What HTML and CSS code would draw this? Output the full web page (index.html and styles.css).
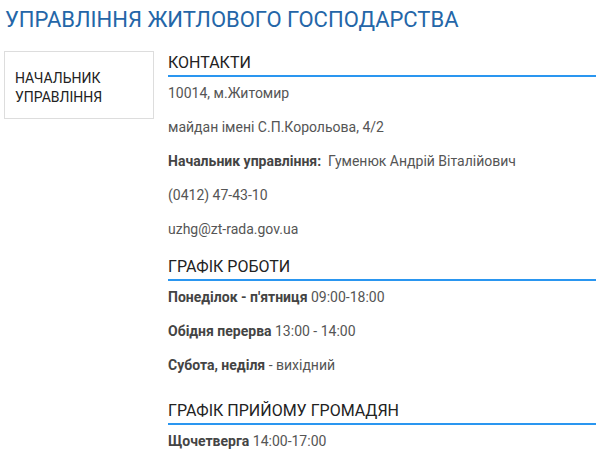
FILE: index.html
```html
<!DOCTYPE html>
<html lang="uk">
<head>
  <meta charset="UTF-8">
  <meta name="viewport" content="width=device-width, initial-scale=1.0">
  <title>Управління житлового господарства</title>
  <link rel="stylesheet" href="styles.css">
</head>
<body>
  <h1 class="page-title">Управління житлового господарства</h1>
  <div class="layout">
    <div class="chief-card">
      <p>Начальник управління</p>
    </div>
    <div class="info">
      <div class="section">
        <h3>Контакти</h3>
        <p>10014, м.Житомир</p>
        <p>майдан імені С.П.Корольова, 4/2</p>
        <p><strong>Начальник управління:</strong>&nbsp; Гуменюк Андрій Віталійович</p>
        <p>(0412) 47-43-10</p>
        <p>uzhg@zt-rada.gov.ua</p>
      </div>
      <div class="section">
        <h3>Графік роботи</h3>
        <p><strong>Понеділок - п'ятниця</strong> 09:00-18:00</p>
        <p><strong>Обідня перерва</strong> 13:00 - 14:00</p>
        <p><strong>Субота, неділя</strong> - вихідний</p>
      </div>
      <div class="section section-spaced">
        <h3>Графік прийому громадян</h3>
        <p><strong>Щочетверга</strong> 14:00-17:00</p>
      </div>
    </div>
  </div>
</body>
</html>
```

FILE: styles.css
```css
body {
  font-family: Roboto, "Noto Sans", Arial, sans-serif;
  background-color: #ffffff;
  color: #555;
  margin: 0;
  padding: 5px 0 0 4px;
}
.page-title {
  margin: 0 0 16px 1px;
  font-size: 22px;
  line-height: 30px;
  font-weight: 400;
  text-transform: uppercase;
  color: #2466a8;
}
.layout {
  display: flex;
  gap: 14px;
  align-items: flex-start;
}
.chief-card {
  flex-shrink: 0;
  border: 1px solid #ddd;
  padding: 17px 10px 0;
  width: 128px;
  height: 49px;
}
.chief-card p {
  margin: 0;
  font-size: 14px;
  line-height: 19px;
  text-transform: uppercase;
  color: #222;
}
.info {
  flex: 1;
  padding-top: 2px;
}
.section h3 {
  margin: 18px 0 6px;
  padding-bottom: 2px;
  font-size: 16px;
  line-height: 20px;
  font-weight: 400;
  text-transform: uppercase;
  color: #222;
  border-bottom: 2px solid #2a96f0;
}
.section:first-child h3 {
  margin-top: 0;
}
.section-spaced h3 {
  margin-top: 26px;
}
.section p {
  margin: 0 0 14px;
  font-size: 14px;
  line-height: 20px;
}
.section strong {
  font-weight: 700;
  color: #444;
}
```
